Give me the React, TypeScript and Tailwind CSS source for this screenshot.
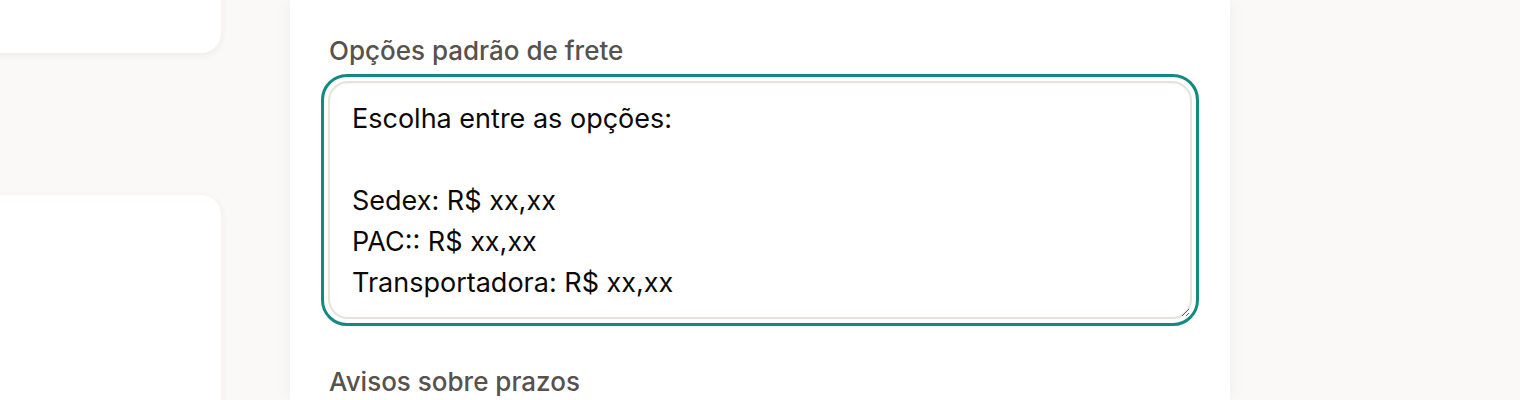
export default function App() {
  return (
    <div
      className="flex h-[400px] w-[1520px] overflow-hidden bg-[#faf9f8]"
      style={{ fontFamily: "Inter, 'Noto Sans', sans-serif" }}
    >
      {/* left column of cards, cut off by the viewport */}
      <div className="flex w-[290px] shrink-0 flex-col">
        <div className="-mt-[40px] ml-[-40px] h-[93px] w-[261px] shrink-0 rounded-[20px] bg-white shadow-[0_2px_8px_rgba(0,0,0,0.06)]" />
        <div className="ml-[-40px] mt-[142px] h-[260px] w-[261px] shrink-0 rounded-[20px] bg-white shadow-[0_2px_8px_rgba(0,0,0,0.06)]" />
      </div>

      {/* settings panel */}
      <div className="w-[940px] shrink-0 bg-white px-[31px] pt-[36px] shadow-[0_0_18px_rgba(0,0,0,0.05)]">
        <label className="ml-[8px] block text-[26px] font-medium leading-[30px] text-[#57524d]">
          Opções padrão de frete
        </label>
        <div className="mt-[8px] w-[878px] rounded-[26px] border-[3px] border-[#138a80] bg-white p-[4px]">
          <textarea
            className="block h-[238px] w-full resize-y rounded-[20px] border-2 border-[#e6e2de] bg-white px-[22px] pt-[15px] text-[27px] leading-[41px] text-[#0c0a09] shadow-[inset_0_1px_2px_rgba(0,0,0,0.04)] outline-none"
            style={{ fontFamily: "Inter, 'Noto Sans', sans-serif" }}
            defaultValue={"Escolha entre as opções:\n\nSedex: R$ xx,xx\nPAC:: R$ xx,xx\nTransportadora: R$ xx,xx"}
          />
        </div>
        <label className="ml-[8px] mt-[41px] block text-[26px] font-medium leading-[30px] text-[#57524d]">
          Avisos sobre prazos
        </label>
      </div>

      <div className="flex-1" />
    </div>
  );
}
